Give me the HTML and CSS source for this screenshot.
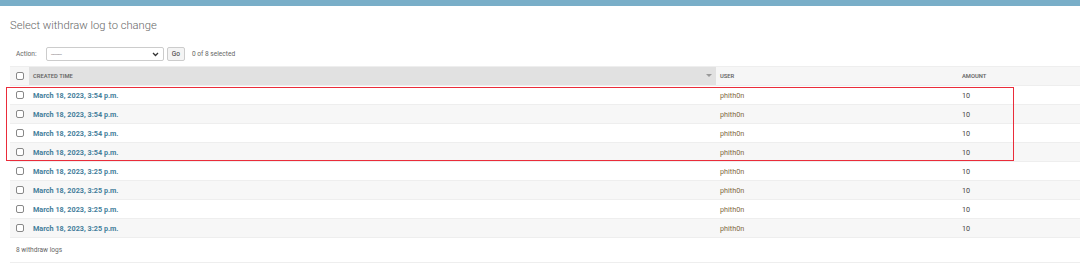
FILE: index.html
```html
<!DOCTYPE html>
<html>
<head>
<meta charset="utf-8">
<link rel="stylesheet" href="styles.css">
</head>
<body>
<div class="topbar"></div>
<div class="content">
  <h1 class="title">Select withdraw log to change</h1>
  <div class="actions">
    <label class="action-label">Action:</label>
    <div class="select"><span class="select-dash">---------</span><svg class="chev" width="7" height="5" viewBox="0 0 7 5"><path d="M1 1l2.5 2.5L6 1" fill="none" stroke="#333" stroke-width="1.3"/></svg></div>
    <button class="go">Go</button>
    <span class="counter">0 of 8 selected</span>
  </div>
  <table class="result">
    <thead>
      <tr>
        <th class="c-check"><span class="cb"></span></th>
        <th class="c-time sorted"><div class="th-in"><span>Created time</span><svg class="sort" width="6" height="4" viewBox="0 0 6 4"><path d="M0 0h6L3 3z" fill="#999"/></svg></div></th>
        <th class="c-user">User</th>
        <th class="c-amount">Amount</th>
      </tr>
    </thead>
    <tbody>
      <tr><td class="c-check"><span class="cb"></span></td><td><a class="link">March 18, 2023, 3:54 p.m.</a></td><td class="user">phith0n</td><td class="num">10</td></tr>
      <tr><td class="c-check"><span class="cb"></span></td><td><a class="link">March 18, 2023, 3:54 p.m.</a></td><td class="user">phith0n</td><td class="num">10</td></tr>
      <tr><td class="c-check"><span class="cb"></span></td><td><a class="link">March 18, 2023, 3:54 p.m.</a></td><td class="user">phith0n</td><td class="num">10</td></tr>
      <tr><td class="c-check"><span class="cb"></span></td><td><a class="link">March 18, 2023, 3:54 p.m.</a></td><td class="user">phith0n</td><td class="num">10</td></tr>
      <tr><td class="c-check"><span class="cb"></span></td><td><a class="link">March 18, 2023, 3:25 p.m.</a></td><td class="user">phith0n</td><td class="num">10</td></tr>
      <tr><td class="c-check"><span class="cb"></span></td><td><a class="link">March 18, 2023, 3:25 p.m.</a></td><td class="user">phith0n</td><td class="num">10</td></tr>
      <tr><td class="c-check"><span class="cb"></span></td><td><a class="link">March 18, 2023, 3:25 p.m.</a></td><td class="user">phith0n</td><td class="num">10</td></tr>
      <tr><td class="c-check"><span class="cb"></span></td><td><a class="link">March 18, 2023, 3:25 p.m.</a></td><td class="user">phith0n</td><td class="num">10</td></tr>
    </tbody>
  </table>
  <p class="paginator">8 withdraw logs</p>
  <div class="highlight"></div>
</div>
</body>
</html>
```

FILE: styles.css
```css
html, body {
  margin: 0;
  padding: 0;
  background: #fff;
  font-family: Roboto, "Liberation Sans", sans-serif;
  color: #333;
}
.topbar {
  height: 6px;
  background: #79aec8;
}
.content {
  position: relative;
  padding-left: 10px;
}
.title {
  margin: 0;
  padding-top: 12px;
  height: 16px;
  font-size: 11.2px;
  line-height: 16px;
  font-weight: 300;
  color: #666;
}
.actions {
  display: flex;
  align-items: center;
  height: 14px;
  margin-top: 13px;
  padding-left: 6px;
  font-size: 6.6px;
  color: #666;
}
.action-label {
  width: 30px;
}
.select {
  box-sizing: border-box;
  width: 118px;
  height: 14px;
  border: 1px solid #ccc;
  border-radius: 2px;
  display: flex;
  align-items: center;
  justify-content: space-between;
  padding: 0 4px 0 4px;
  color: #555;
}
.select-dash {
  font-size: 5px;
  letter-spacing: -0.2px;
}
.go {
  box-sizing: border-box;
  margin-left: 3px;
  width: 18px;
  height: 14px;
  padding: 0;
  border: 1px solid #ccc;
  border-radius: 2px;
  background: #f4f4f4;
  font-family: inherit;
  font-size: 6.6px;
  color: #333;
}
.counter {
  margin-left: 7px;
}
.result {
  margin-top: 5px;
  width: 1070px;
  border-collapse: collapse;
  table-layout: fixed;
  font-size: 7.25px;
}
.result th, .result td {
  padding: 0 0 0 4px;
  text-align: left;
  vertical-align: middle;
}
.result thead tr {
  height: 19px;
  border-top: 1px solid #eee;
  border-bottom: 1px solid #eee;
}
.result th {
  background: #f6f6f6;
  font-size: 5.8px;
  font-weight: 600;
  text-transform: uppercase;
  color: #666;
}
.result th.sorted {
  background: #e1e1e1;
}
.th-in {
  display: flex;
  align-items: center;
  justify-content: space-between;
  padding-right: 4px;
}
.c-check { width: 13px; }
.c-time { width: 683px; }
.c-user { width: 238px; }
.result .c-check {
  padding-left: 6px;
}
.result tbody tr {
  height: 19px;
  border-bottom: 1px solid #eee;
}
.result tbody tr:nth-child(even) {
  background: #f7f7f7;
}
.cb {
  display: block;
  box-sizing: border-box;
  width: 7.5px;
  height: 7.5px;
  border: 1px solid #888;
  border-radius: 2px;
  background: #fff;
}
.link {
  color: #447e9b;
  font-weight: 700;
  text-decoration: none;
}
.user {
  color: #7f6a44;
}
.num {
  color: #444;
}
.paginator {
  margin: 0;
  height: 24px;
  line-height: 24px;
  padding-left: 6px;
  border-bottom: 1px solid #eee;
  font-size: 6.6px;
  color: #666;
}
.highlight {
  position: absolute;
  left: 6px;
  top: 81px;
  width: 1008px;
  height: 74px;
  box-sizing: border-box;
  border: 1px solid #ea2c3a;
  pointer-events: none;
}
```
